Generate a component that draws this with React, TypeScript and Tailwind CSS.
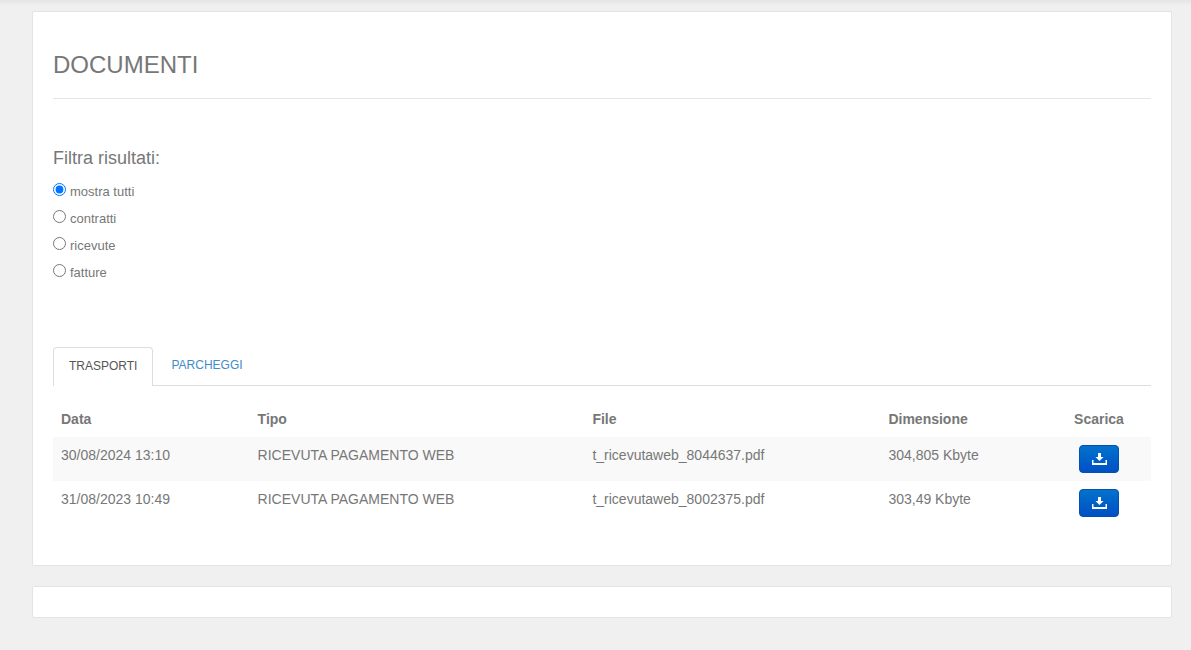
const rows = [
  { data: "30/08/2024 13:10", tipo: "RICEVUTA PAGAMENTO WEB", file: "t_ricevutaweb_8044637.pdf", size: "304,805 Kbyte" },
  { data: "31/08/2023 10:49", tipo: "RICEVUTA PAGAMENTO WEB", file: "t_ricevutaweb_8002375.pdf", size: "303,49 Kbyte" },
]

const filters = ["mostra tutti", "contratti", "ricevute", "fatture"]

function DownloadIcon() {
  return (
    <svg width="15" height="12" viewBox="0 0 15 12" fill="white">
      <path d="M6 0h3v4h2.5L7.5 8 3.5 4H6z" />
      <path d="M0 7h1.5v3h12V7H15v5H0z" />
    </svg>
  )
}

export default function App() {
  return (
    <div className="min-h-[650px] bg-[#f0f0f0] pl-8 pr-[19px] pt-[11px] text-sm text-[#777] shadow-[inset_0_5px_5px_-3px_rgba(0,0,0,0.06)] [font-family:'Liberation_Sans',Arial,sans-serif]">
      <div className="h-[555px] rounded-[2px] border border-[#e3e3e3] bg-white px-5">
        <h1 className="mt-[40px] border-b border-[#e5e5e5] pb-[20px] text-2xl leading-[26px]">DOCUMENTI</h1>

        <h2 className="mt-[49px] text-lg leading-5">Filtra risultati:</h2>
        <div className="mt-[11px]">
          {filters.map((f, i) => (
            <label key={f} className="flex h-[27px] items-center text-[13px]">
              <input type="radio" name="filtro" defaultChecked={i === 0} className="m-0 mb-[6px] mr-[4px] h-[13px] w-[13px]" />
              {f}
            </label>
          ))}
        </div>

        <div className="mt-[60px] flex h-[39px] border-b border-[#ddd] text-xs">
          <div className="h-[39px] rounded-t-[4px] border border-b-0 border-[#ddd] bg-white px-[15px] leading-[37px] text-[#555]">TRASPORTI</div>
          <div className="ml-[3px] px-[15px] leading-[37px] text-[#428bca]">PARCHEGGI</div>
        </div>

        <table className="mt-[15px] w-full table-fixed border-collapse">
          <thead>
            <tr className="h-9 text-left">
              <th className="w-[196.6px] pl-2 font-bold">Data</th>
              <th className="w-[334.8px] pl-2 font-bold">Tipo</th>
              <th className="w-[296px] pl-2 font-bold">File</th>
              <th className="pl-2 font-bold">Dimensione</th>
              <th className="w-[104px] text-center font-bold">Scarica</th>
            </tr>
          </thead>
          <tbody>
            {rows.map((r, i) => (
              <tr key={r.file} className={i === 0 ? "h-11 bg-[#f9f9f9]" : "h-11"}>
                <td className="pl-2 pb-2">{r.data}</td>
                <td className="pl-2 pb-2">{r.tipo}</td>
                <td className="pl-2 pb-2">{r.file}</td>
                <td className="pl-2 pb-2">{r.size}</td>
                <td className="text-center">
                  <button className="inline-flex h-7 w-10 items-center justify-center rounded-[4px] border border-[#0350b0] bg-gradient-to-b from-[#0572cc] to-[#004fc4] align-middle">
                    <DownloadIcon />
                  </button>
                </td>
              </tr>
            ))}
          </tbody>
        </table>
      </div>

      <div className="mt-5 h-8 rounded-[2px] border border-[#e3e3e3] bg-white" />
    </div>
  )
}
